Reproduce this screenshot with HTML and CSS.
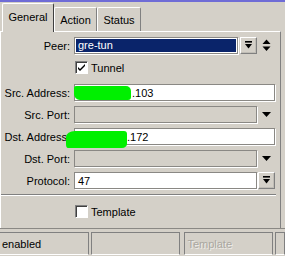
FILE: index.html
```html
<!DOCTYPE html>
<html lang="en">
<head>
    <meta charset="UTF-8">
    <title>Interface</title>
    <link rel="stylesheet" href="styles.css">
</head>
<body>
    <div class="titlebar"></div>

    <div class="tabs">
        <div class="tab tab-general active">General</div>
        <div class="tab tab-action">Action</div>
        <div class="tab tab-status">Status</div>
    </div>

    <div class="panel">
        <div class="row">
            <label>Peer:</label>
            <div class="field peer focus"><span class="sel">gre-tun</span></div>
            <div class="btn">
                <svg width="9" height="9" viewBox="0 0 9 9"><rect x="1" y="0" width="7" height="1.6" fill="#000"/><polygon points="1,3 8,3 4.5,7.5" fill="#000"/></svg>
            </div>
            <div class="arrow">
                <svg width="9" height="13" viewBox="0 0 9 13"><polygon points="0.5,5 8.5,5 4.5,0.5" fill="#000"/><polygon points="0.5,7.5 8.5,7.5 4.5,12" fill="#000"/></svg>
            </div>
        </div>

        <div class="row row-check">
            <label></label>
            <span class="box">
                <svg width="11" height="11" viewBox="0 0 11 11"><path d="M2 5 L4 7 L9 2 L9 4 L4 9 L2 7 Z" fill="#000"/></svg>
            </span>
            <span class="check-text">Tunnel</span>
        </div>

        <div class="row">
            <label>Src. Address:</label>
            <div class="field wide"><span class="src-text">.103</span></div>
        </div>

        <div class="row">
            <label>Src. Port:</label>
            <div class="field short disabled"></div>
            <div class="arrow">
                <svg width="9" height="5" viewBox="0 0 9 5"><polygon points="0,0 9,0 4.5,5" fill="#000"/></svg>
            </div>
        </div>

        <div class="row">
            <label>Dst. Address:</label>
            <div class="field wide"><span class="dst-text">.172</span></div>
        </div>

        <div class="row">
            <label>Dst. Port:</label>
            <div class="field short disabled"></div>
            <div class="arrow">
                <svg width="9" height="5" viewBox="0 0 9 5"><polygon points="0,0 9,0 4.5,5" fill="#000"/></svg>
            </div>
        </div>

        <div class="row row-protocol">
            <label>Protocol:</label>
            <div class="field short">47</div>
            <div class="btn">
                <svg width="9" height="9" viewBox="0 0 9 9"><rect x="1" y="0" width="7" height="1.6" fill="#000"/><polygon points="1,3 8,3 4.5,7.5" fill="#000"/></svg>
            </div>
        </div>

        <div class="sep"></div>

        <div class="row row-check">
            <label></label>
            <span class="box"></span>
            <span class="check-text">Template</span>
        </div>
    </div>

    <div class="statusbar">
        <div class="cell c1">enabled</div>
        <div class="cell c2"></div>
        <div class="cell c3 dim">Template</div>
        <div class="cell c4"></div>
    </div>

    <!-- blurred out addresses -->
    <span class="blot blot-src"></span>
    <span class="blot blot-dst"></span>
</body>
</html>
```

FILE: styles.css
```css
body {
    margin: 0;
    width: 285px;
    height: 256px;
    overflow: hidden;
    position: relative;
    background-color: #d4d0c8;
    font-family: "Liberation Sans", Arial, sans-serif;
    font-size: 11px;
    color: #000;
}

.titlebar {
    height: 2px;
    background-color: #6f6cd6;
}

.tabs {
    display: flex;
    align-items: flex-end;
    height: 29px;
    padding-left: 2px;
}

.tab {
    box-sizing: border-box;
    height: 24px;
    padding-top: 6px;
    text-align: center;
    border-top: 1px solid #fff;
    border-left: 1px solid #fff;
    border-right: 1px solid #808080;
    border-radius: 2px 2px 0 0;
    white-space: nowrap;
}

.tab-general { width: 52px; }
.tab-action { width: 43px; }
.tab-status { width: 44px; }

.tab.active {
    height: 29px;
    padding-top: 7px;
    margin-bottom: -1px;
    background-color: #d4d0c8;
    position: relative;
    z-index: 1;
    border-right: 1px solid #404040;
}

.panel {
    box-sizing: border-box;
    width: 281px;
    height: 197px;
    padding-top: 5px;
    border-top: 1px solid #fff;
    border-left: 1px solid #fff;
    border-right: 1px solid #808080;
}

.row {
    display: flex;
    align-items: center;
    height: 17px;
    margin-bottom: 5px;
}

.row label {
    flex: none;
    width: 69px;
    margin-right: 4px;
    text-align: right;
    white-space: nowrap;
}

.row-check {
    margin-bottom: 8px;
}

.row-protocol {
    margin-top: 1px;
}

.field {
    flex: none;
    box-sizing: border-box;
    height: 17px;
    padding: 1px 3px 0;
    background-color: #fff;
    border: 1px solid #8a8884;
    box-shadow: 1px 1px 0 #fff;
    line-height: 14px;
    white-space: nowrap;
    overflow: hidden;
}

.field.wide { width: 201px; }
.field.short { width: 183px; }

.field.disabled {
    background-color: #d4d0c8;
}

.field.peer {
    width: 164px;
    padding: 1px;
}

.sel {
    display: block;
    height: 13px;
    padding-left: 2px;
    background-color: #0a246a;
    color: #fff;
    line-height: 13px;
}

.src-text { padding-left: 54px; }
.dst-text { padding-left: 49px; }

.btn {
    flex: none;
    box-sizing: border-box;
    width: 17px;
    height: 17px;
    margin-left: 2px;
    display: flex;
    align-items: center;
    justify-content: center;
    border: 1px solid #fff;
    border-right-color: #808080;
    border-bottom-color: #808080;
    box-shadow: inset -1px -1px 0 #c0bdb6;
}

.row-protocol .btn {
    margin-left: 1px;
}

.arrow {
    flex: none;
    width: 18px;
    height: 17px;
    display: flex;
    align-items: center;
    justify-content: center;
}

.box {
    flex: none;
    box-sizing: border-box;
    width: 13px;
    height: 13px;
    margin-left: 1px;
    background-color: #fff;
    border-top: 1px solid #808080;
    border-left: 1px solid #808080;
    border-bottom: 1px solid #fff;
    border-right: 1px solid #fff;
    box-shadow: inset 1px 1px 0 #404040;
    display: flex;
}

.check-text {
    margin-left: 3px;
}

.sep {
    width: 275px;
    margin: 3px 0 7px;
    border-top: 1px solid #808080;
    border-bottom: 1px solid #fff;
}

.statusbar {
    display: flex;
    height: 28px;
    box-sizing: border-box;
    padding-top: 3px;
    border-top: 1px solid #8a8884;
}

.cell {
    box-sizing: border-box;
    height: 23px;
    padding: 5px 2px 0;
    border-top: 1px solid #808080;
    border-left: 1px solid #808080;
    border-bottom: 1px solid #fff;
    border-right: 1px solid #808080;
}

.c1 { width: 91px; border-left: none; }
.c2 { width: 92px; margin-left: 2px; }
.c3 { width: 91px; margin-left: 4px; }
.c4 { width: 10px; margin-left: 2px; }

.dim {
    color: #aaa7a0;
    text-shadow: 1px 1px 0 #eeece8;
}

.blot {
    position: absolute;
    background-color: #00f000;
}

.blot-src {
    left: 74px;
    top: 86px;
    width: 57px;
    height: 14px;
    border-radius: 2px 5px 3px 6px;
}

.blot-dst {
    left: 66px;
    top: 131px;
    width: 61px;
    height: 17px;
    border-radius: 9px 3px 5px 2px / 6px 3px 4px 4px;
}
```
